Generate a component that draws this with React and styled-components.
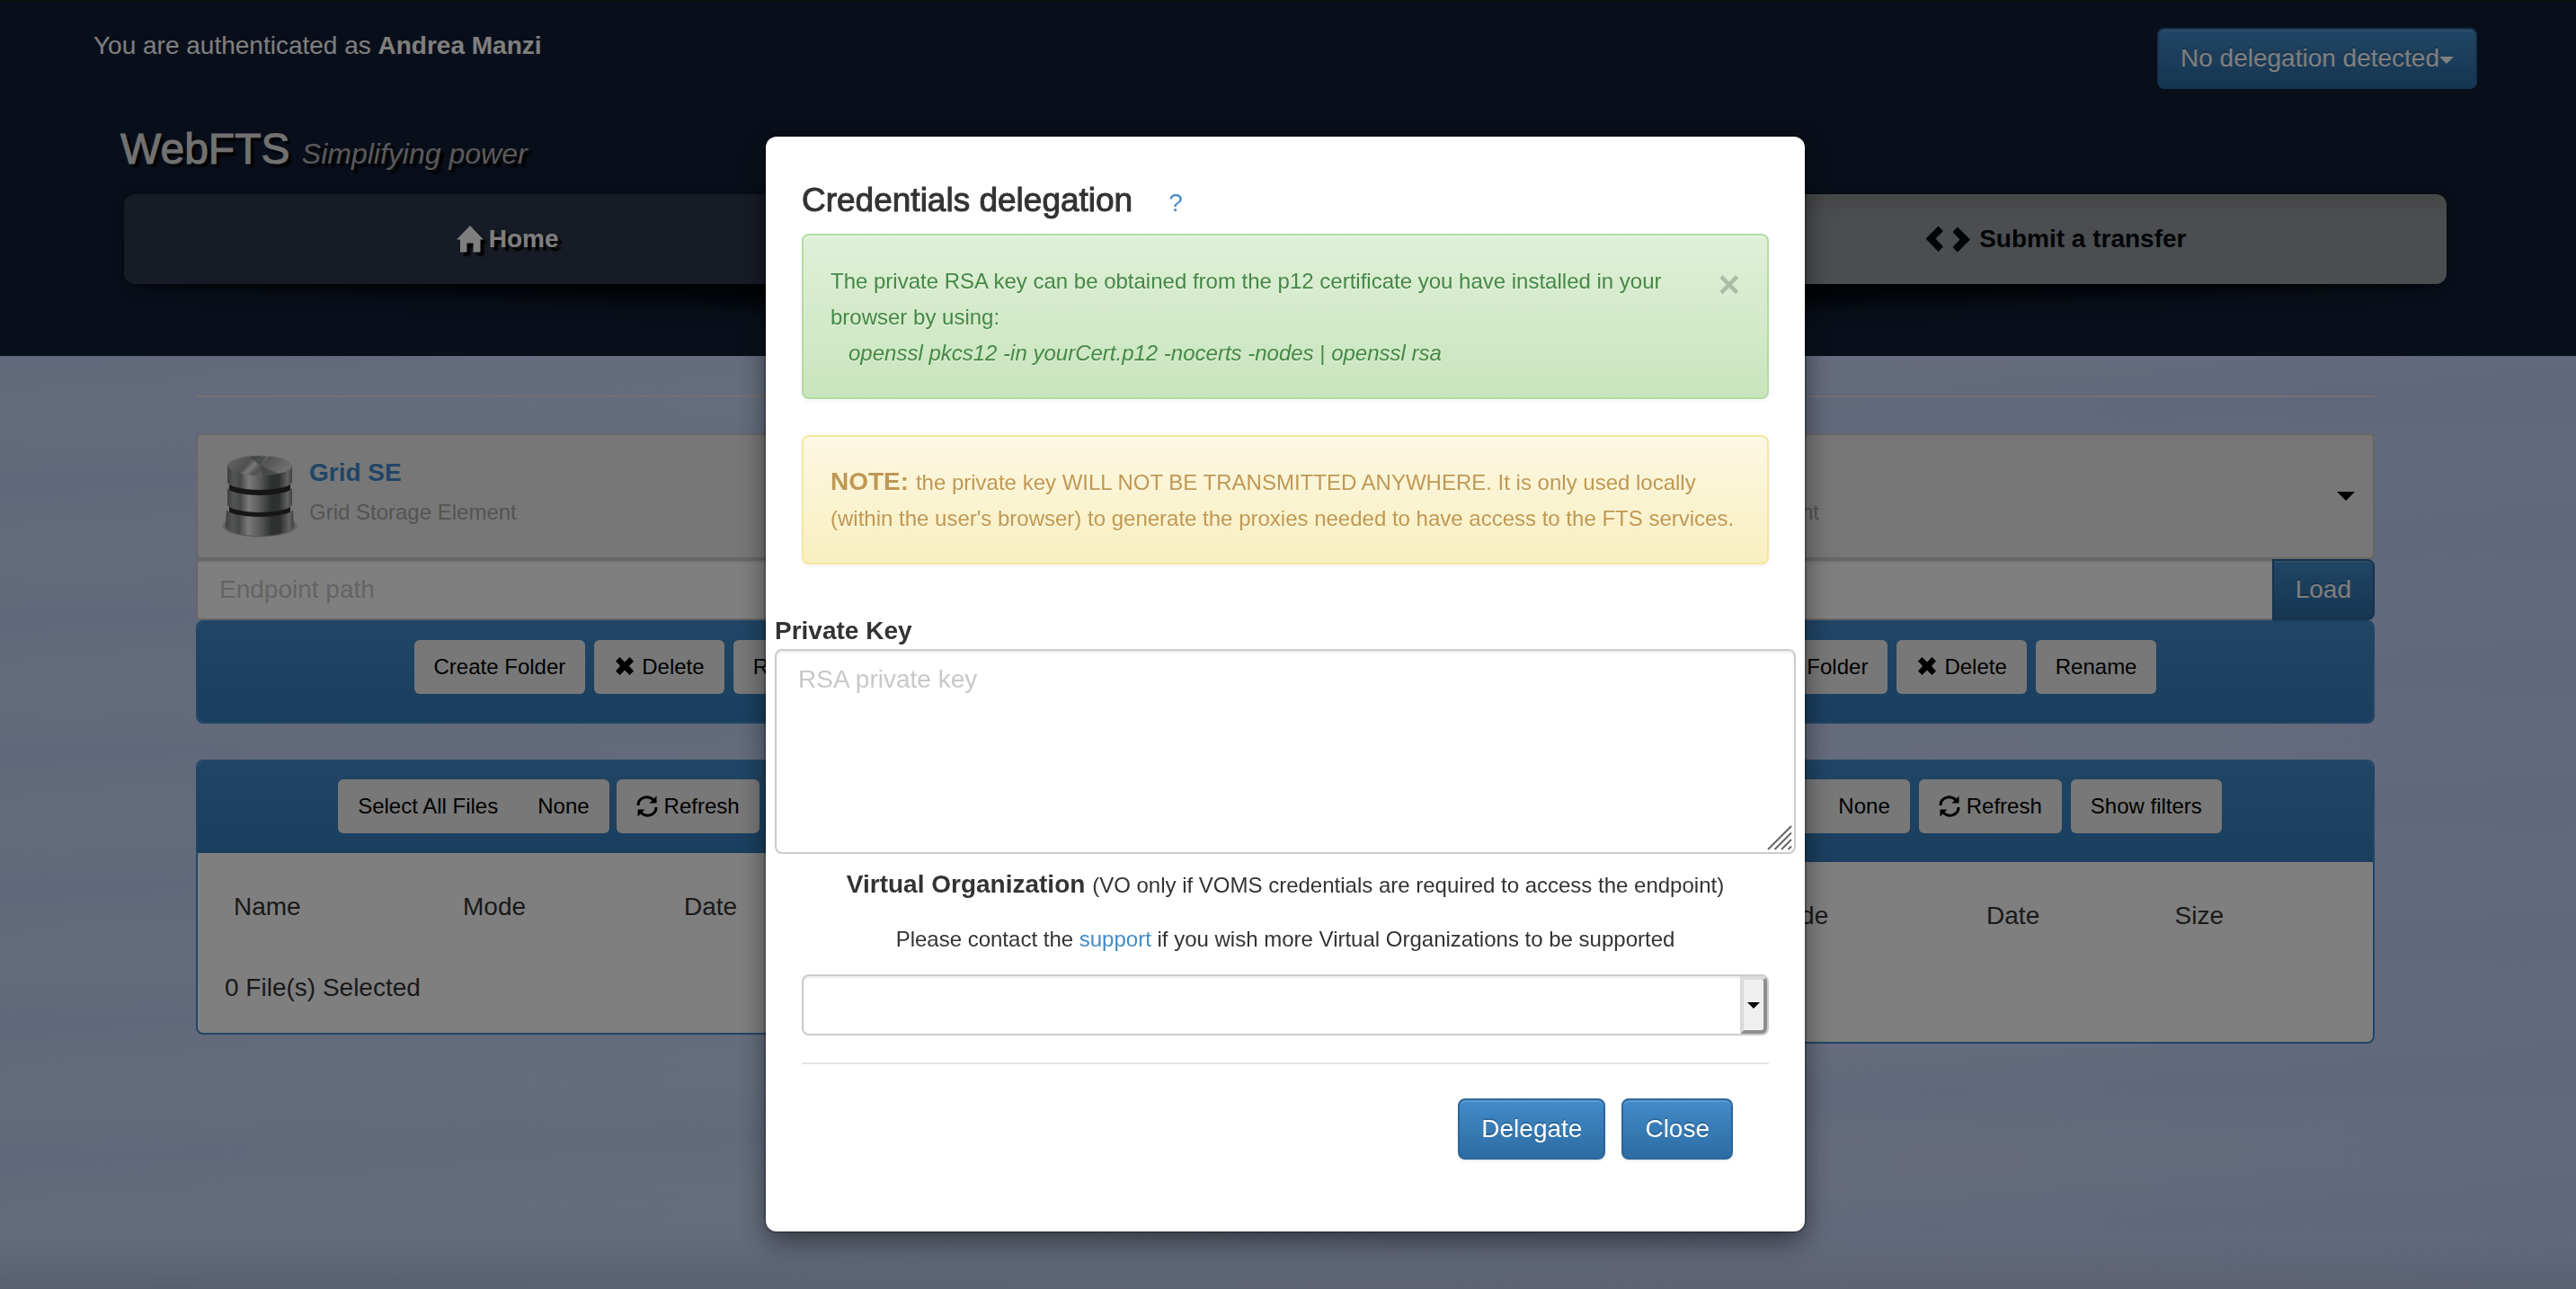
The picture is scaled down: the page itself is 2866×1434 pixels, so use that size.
import React from 'react';
import styled, { createGlobalStyle, css } from 'styled-components';

const GlobalStyle = createGlobalStyle`
  *, *::before, *::after { box-sizing: border-box; }
  body {
    margin: 0;
    min-height: 100vh;
    font: 28px/40px "Liberation Sans", Arial, sans-serif;
    color: #333;
    background:
      linear-gradient(to top, rgba(60, 60, 90, 0.12), transparent 60px),
      repeating-linear-gradient(178deg, rgba(255, 255, 255, 0.05) 0 30px, rgba(110, 140, 200, 0.05) 90px, rgba(255, 255, 255, 0.05) 150px),
      linear-gradient(90deg, #c4d4f8, #cadafa 40%, #c8d6fa 70%, #c2d2fa);
  }
  button, input, textarea, select { font: inherit; }
  p, h1, h2 { margin: 0; }
`;

const primary = css`
  color: #fff;
  border: 2px solid #2b669a;
  background: linear-gradient(#428bca, #2d6ca2);
  text-shadow: 0 -2px 0 rgba(0, 0, 0, 0.2);
  box-shadow: inset 0 2px 0 rgba(255, 255, 255, 0.15), 0 2px 2px rgba(0, 0, 0, 0.075);
`;

/* ---------- header ---------- */
const Header = styled.header`
  position: relative;
  z-index: 0;
  border-top: 2px solid #161c1c;
  background: #121e34;
  padding-bottom: 80px;
`;
const TopBar = styled.div`
  display: flex;
  justify-content: space-between;
  align-items: flex-start;
  padding: 29px 110px 0 104px;
  color: #fff;
`;
const PrimaryButton = styled.button`
  ${primary}
  height: 68px;
  padding: 0 24px;
  border-radius: ${(p) => (p.$joined ? '0 8px 8px 0' : '8px')};
  white-space: nowrap;
`;
const Caret = styled.span`
  display: inline-block;
  vertical-align: middle;
  border: ${(p) => p.$size}px solid transparent;
  border-top-color: currentColor;
  border-bottom: 0;
`;
const Brand = styled.h1`
  margin: 40px 144px 0 134px;
  font-size: 48px;
  line-height: 54px;
  font-weight: 400;
  color: #e2e2e2;
  -webkit-text-stroke: 1px currentColor;
  text-shadow: 4px 4px 2px #000;
`;
const Tagline = styled.em`
  font-size: 32px;
  line-height: 32px;
  color: #b4b4b4;
  -webkit-text-stroke: 0;
`;
const Nav = styled.nav`
  position: relative;
  margin: 23px 144px 0 138px;
  display: grid;
  grid-template-columns: repeat(3, 1fr);
  border-radius: 12px;
  box-shadow: 0 0 8px rgba(0, 0, 0, 0.5);

  &::before, &::after {
    content: '';
    position: absolute;
    z-index: -1;
    bottom: 30px;
    width: 50%;
    height: 40px;
    box-shadow: 0 30px 20px rgba(0, 0, 0, 0.8);
  }
  &::before { left: 20px; transform: rotate(2deg); transform-origin: left bottom; }
  &::after { right: 20px; transform: rotate(-2deg); transform-origin: right bottom; }
`;
const Tab = styled.a`
  display: flex;
  justify-content: center;
  align-items: center;
  gap: 6px;
  padding: 30px 38px 30px 30px;
  font-weight: 700;
  text-decoration: none;
  color: ${(p) => (p.$active ? '#04080c' : '#fff')};
  background: ${(p) => (p.$active ? 'linear-gradient(#8e8e93, #969aa0 30px)' : '#2f374a')};
  text-shadow: ${(p) => (p.$active ? 'none' : '4px 4px 2px #000')};
  &:first-child { border-radius: 12px 0 0 12px; }
  &:last-child { border-radius: 0 12px 12px 0; }
  svg { filter: ${(p) => (p.$active ? 'none' : 'drop-shadow(4px 4px 1px #000)')}; }
`;

/* ---------- page ---------- */
const Main = styled.main`
  padding: 44px 224px 40px 218px;
`;
const Rule = styled.hr`
  margin: ${(p) => p.$margin};
  border: 0;
  border-top: 2px solid ${(p) => p.$color};
`;
const Columns = styled.div`
  display: grid;
  grid-template-columns: 37fr 18fr 37fr;
  align-items: start;
`;
const Side = styled.section`
  grid-column: ${(p) => p.$col};
  min-width: 0;
`;
const Picker = styled.button`
  display: flex;
  align-items: center;
  width: 100%;
  height: 140px;
  padding: 0 20px 0 26px;
  border: 2px solid #ccc;
  border-radius: 6px;
  background: #eee;
  color: #000;
  text-align: left;

  > :last-child { margin-left: auto; }
`;
const PickerText = styled.span`
  display: flex;
  flex-direction: column;
  gap: 4px;
  margin-left: 12px;
  padding-bottom: 8px;
`;
const PickerTitle = styled.strong`
  color: #428bca;
`;
const PickerDesc = styled.span`
  font-size: 24px;
  color: #a9a9a9;
`;
const PathRow = styled.div`
  display: flex;
`;
const field = css`
  border: 2px solid #ccc;
  background: #fff;
  color: #555;
  box-shadow: inset 0 2px 2px rgba(0, 0, 0, 0.075);
  &::placeholder { color: #c8c8c8; opacity: 1; }
`;
const PathInput = styled.input`
  ${field}
  flex: 1;
  min-width: 0;
  height: 68px;
  padding: 0 24px;
  border-right: 0;
`;
const Panel = styled.div`
  margin-bottom: 40px;
  border: 2px solid #428bca;
  border-radius: 8px;
  background: #fff;
  overflow: hidden;
`;
const Toolbar = styled.div`
  display: flex;
  justify-content: center;
  gap: ${(p) => p.$gap || 10}px;
  padding: ${(p) => p.$padding};
  background: linear-gradient(#428bca, #357ebd);
`;
const ToolGroup = styled.div`
  display: flex;
  border-radius: 6px;
  overflow: hidden;
`;
const ToolButton = styled.button`
  display: flex;
  align-items: center;
  gap: 7px;
  height: 60px;
  padding: 0 22px;
  border: 0;
  border-radius: ${(p) => (p.$grouped ? 0 : '6px')};
  background: #f0f0f0;
  color: #000;
  font-size: 24px;
  white-space: nowrap;
`;
const ListBody = styled.div`
  padding: 30px;
`;
const FileTable = styled.table`
  width: 100%;
  table-layout: fixed;
  border-collapse: collapse;
  margin-bottom: 40px;
  th { padding: 10px; font-weight: 400; text-align: left; }
`;
const Col = styled.col`
  width: ${(p) => p.$w};
`;

/* ---------- modal ---------- */
const Backdrop = styled.div`
  position: fixed;
  inset: 0;
  z-index: 10;
  padding: 152px 6px 0 0;
  background: rgba(0, 0, 0, 0.5);
`;
const Dialog = styled.div`
  width: 1156px;
  max-width: 100%;
  margin: 0 auto;
  padding: 50px 40px 80px;
  border-radius: 12px;
  background: #fff;
  box-shadow: 0 0 0 2px rgba(0, 0, 0, 0.2), 0 10px 30px rgba(0, 0, 0, 0.5);
`;
const DialogHead = styled.div`
  display: flex;
  align-items: baseline;
  gap: 40px;
  height: 58px;
`;
const DialogTitle = styled.h2`
  font-size: 37px;
  line-height: 42px;
  font-weight: 400;
  -webkit-text-stroke: 1px currentColor;
`;
const Link = styled.a`
  color: #428bca;
  text-decoration: none;
`;
const tones = {
  success: css`
    border-color: #b2dba1;
    background: linear-gradient(#dff0d8, #c8e5bc);
    color: #468847;
    padding-right: 72px;
  `,
  warning: css`
    border-color: #f5e79e;
    background: linear-gradient(#fcf8e3, #f8efc0);
    color: #c09853;
  `,
};
const Alert = styled.div`
  position: relative;
  margin-bottom: 40px;
  padding: 30px;
  border: 2px solid;
  border-radius: 8px;
  text-shadow: 0 2px 0 rgba(255, 255, 255, 0.2);
  box-shadow: inset 0 2px 0 rgba(255, 255, 255, 0.25), 0 2px 4px rgba(0, 0, 0, 0.05);
  ${(p) => tones[p.$tone]}
`;
const Small = styled.span`
  font-size: 24px;
  line-height: 24px;
`;
const Command = styled.em`
  padding-left: 20px;
`;
const Dismiss = styled.button`
  position: absolute;
  top: 34px;
  right: 30px;
  padding: 0;
  border: 0;
  background: none;
  font-size: 42px;
  line-height: 42px;
  font-weight: 700;
  color: #000;
  opacity: 0.2;
  text-shadow: 0 2px 0 #fff;
`;
const KeyField = styled.div`
  position: relative;
  margin: 54px -30px 14px;
  display: flex;
  flex-direction: column;
`;
const KeyLabel = styled.label`
  font-weight: 700;
`;
const KeyArea = styled.textarea`
  ${field}
  display: block;
  width: 100%;
  height: 228px;
  padding: 12px 24px;
  border-radius: 8px;
  resize: none;
`;
const Grip = styled.svg`
  position: absolute;
  right: 3px;
  bottom: 3px;
`;
const Note = styled.p`
  margin-bottom: 20px;
  text-align: center;
`;
const SelectWrap = styled.div`
  position: relative;
`;
const VoSelect = styled.select`
  ${field}
  appearance: none;
  display: block;
  width: 100%;
  height: 68px;
  padding: 0 48px 0 24px;
  border-radius: 8px;
`;
const SelectArrow = styled.span`
  position: absolute;
  top: 2px;
  right: 2px;
  bottom: 2px;
  width: 30px;
  display: flex;
  align-items: center;
  justify-content: center;
  border: 4px solid;
  border-color: #dadada #8f8f8f #8f8f8f #dadada;
  border-radius: 0 6px 6px 0;
  background: #efefef;
  color: #000;
  pointer-events: none;
`;
const Actions = styled.div`
  display: flex;
  justify-content: flex-end;
  gap: 18px;
  padding-right: 40px;
`;

/* ---------- icons ---------- */
const HomeIcon = () => (
  <svg width="30" height="30" viewBox="0 0 30 30" fill="currentColor" aria-hidden="true">
    <path d="M15 0 30 15.5H26.5V29.500H18.500V19.500H11.500V29.500H4V15.500H0Z" />
  </svg>
);
const CodeIcon = () => (
  <svg width="54" height="30" viewBox="0 0 54 30" fill="currentColor" aria-hidden="true">
    <path d="M14.500 0.500 20 6 11.500 14.500 20 23.500 14.500 29 0.500 14.500Z" />
    <path d="M36 1.500 30.500 7 38.500 15.500 30.500 24 36 29.500 50 15.500Z" />
  </svg>
);
const RemoveIcon = () => (
  <svg width="24" height="24" viewBox="0 0 24 24" fill="currentColor" aria-hidden="true">
    <path d="M6.500 1 12 6.500 17.500 1 22 5.500 17 11 22 16.500 17.500 21 12 15.500 6.500 21 2 16.500 7 11 2 5.500Z" />
  </svg>
);
const RefreshIcon = () => (
  <svg width="24" height="24" viewBox="0 0 24 24" aria-hidden="true">
    <g fill="none" stroke="currentColor" strokeWidth="3">
      <path d="M2 11C2 2 13-1 19 5" />
      <path d="M22 13C22 22 11 25 5 19" />
    </g>
    <path fill="currentColor" d="M22.500 0.500V8.500H14.500ZM1.500 23.500V15.500H9.500Z" />
  </svg>
);
const DiskIcon = () => (
  <svg width="86" height="96" viewBox="0 0 86 96" aria-hidden="true">
    <defs>
      <linearGradient id="metal" x1="0" x2="1">
        <stop offset="0" stopColor="#777c7a" />
        <stop offset="0.100" stopColor="#a8acaa" />
        <stop offset="0.200" stopColor="#8c908e" />
        <stop offset="0.330" stopColor="#f4f4f4" />
        <stop offset="0.500" stopColor="#b0b3b1" />
        <stop offset="0.680" stopColor="#5a605c" />
        <stop offset="0.800" stopColor="#5e6460" />
        <stop offset="0.930" stopColor="#c2c5c3" />
        <stop offset="1" stopColor="#7e8280" />
      </linearGradient>
      <linearGradient id="lid" x1="0" x2="1" y2="0.300">
        <stop offset="0" stopColor="#cfd1d0" />
        <stop offset="0.400" stopColor="#9fa3a1" />
        <stop offset="0.500" stopColor="#f2f2f2" />
        <stop offset="0.620" stopColor="#a4a8a6" />
        <stop offset="1" stopColor="#dcdddc" />
      </linearGradient>
      <radialGradient id="floor">
        <stop offset="0.700" stopColor="#222" stopOpacity="0.800" />
        <stop offset="1" stopColor="#222" stopOpacity="0" />
      </radialGradient>
    </defs>
    <ellipse cx="43" cy="81" rx="43" ry="13" fill="url(#floor)" />
    <path d="M9 16V78A34 11 0 0 0 77 78V16Z" fill="#2a2d2b" />
    <path d="M6 62A37 9 0 0 0 80 62L81 81A38 11 0 0 1 5 81Z" fill="url(#metal)" />
    <path d="M7 38A36 9 0 0 0 79 38V57A36 9 0 0 1 7 57Z" fill="url(#metal)" />
    <path d="M7 13V32A36 9 0 0 0 79 32V13Z" fill="url(#metal)" />
    <ellipse cx="43" cy="14" rx="36" ry="11" fill="url(#lid)" />
    <path d="M43 14 32 4A36 11 0 0 1 50 3.500ZM43 14 46 25A36 11 0 0 0 64 23Z" fill="#7b827f" opacity="0.700" />
  </svg>
);
const GripIcon = () => (
  <Grip width="30" height="30" viewBox="0 0 30 30" fill="none" stroke="#666" strokeWidth="2" aria-hidden="true">
    <path d="M2 28 28 2M9.500 28 28 9.500M17 28 28 17M24.500 28 28 24.500" />
  </Grip>
);

/* ---------- composition ---------- */
const Endpoint = ({ col, name, listPadding, listGap }) => (
  <Side $col={col}>
    <Picker type="button">
      <DiskIcon />
      <PickerText>
        <PickerTitle>Grid SE</PickerTitle>
        <PickerDesc>Grid Storage Element</PickerDesc>
      </PickerText>
      <Caret $size={10} />
    </Picker>
    <PathRow>
      <PathInput type="text" placeholder="Endpoint path" aria-label={`${name} endpoint path`} />
      <PrimaryButton type="button" $joined>Load</PrimaryButton>
    </PathRow>
    <Panel>
      <Toolbar $padding="20px 20px 31px">
        <ToolButton type="button">Create Folder</ToolButton>
        <ToolButton type="button"><RemoveIcon />Delete</ToolButton>
        <ToolButton type="button">Rename</ToolButton>
      </Toolbar>
    </Panel>
    <Panel>
      <Toolbar $padding={listPadding} $gap={listGap}>
        <ToolGroup>
          <ToolButton type="button" $grouped>Select All Files</ToolButton>
          <ToolButton type="button" $grouped>None</ToolButton>
        </ToolGroup>
        <ToolButton type="button"><RefreshIcon />Refresh</ToolButton>
        <ToolButton type="button">Show filters</ToolButton>
      </Toolbar>
      <ListBody>
        <FileTable>
          <colgroup>
            <Col $w="28%" />
            <Col $w="27%" />
            <Col $w="23%" />
            <Col $w="22%" />
          </colgroup>
          <thead>
            <tr>
              <th scope="col">Name</th>
              <th scope="col">Mode</th>
              <th scope="col">Date</th>
              <th scope="col">Size</th>
            </tr>
          </thead>
        </FileTable>
        <p>0 File(s) Selected</p>
      </ListBody>
    </Panel>
  </Side>
);

const DelegationDialog = () => (
  <Backdrop>
    <Dialog role="dialog" aria-modal="true" aria-labelledby="delegation-title">
      <DialogHead>
        <DialogTitle id="delegation-title">Credentials delegation</DialogTitle>
        <Link href="#help">?</Link>
      </DialogHead>
      <Alert $tone="success">
        <Dismiss type="button" aria-label="Dismiss">×</Dismiss>
        <p>
          <Small>
            The private RSA key can be obtained from the p12 certificate you have installed in your browser by using:
            <br />
            <Command>openssl pkcs12 -in yourCert.p12 -nocerts -nodes</Command> | <em>openssl rsa</em>
          </Small>
        </p>
      </Alert>
      <Alert $tone="warning">
        <p>
          <strong>NOTE:</strong>{' '}
          <Small>
            the private key WILL NOT BE TRANSMITTED ANYWHERE. It is only used locally (within the user's browser) to
            generate the proxies needed to have access to the FTS services.
          </Small>
        </p>
      </Alert>
      <KeyField>
        <KeyLabel htmlFor="private-key">Private Key</KeyLabel>
        <KeyArea id="private-key" placeholder="RSA private key" />
        <GripIcon />
      </KeyField>
      <Note>
        <label htmlFor="vo">
          <strong>Virtual Organization</strong>{' '}
          <Small>(VO only if VOMS credentials are required to access the endpoint)</Small>
        </label>
      </Note>
      <Note>
        <Small>
          Please contact the <Link href="#support">support</Link> if you wish more Virtual Organizations to be supported
        </Small>
      </Note>
      <SelectWrap>
        <VoSelect id="vo" defaultValue="">
          <option value="" />
        </VoSelect>
        <SelectArrow><Caret $size={7} /></SelectArrow>
      </SelectWrap>
      <Rule $margin="30px 0 38px" $color="#e5e5e5" />
      <Actions>
        <PrimaryButton type="button">Delegate</PrimaryButton>
        <PrimaryButton type="button">Close</PrimaryButton>
      </Actions>
    </Dialog>
  </Backdrop>
);

export default function App() {
  return (
    <>
      <GlobalStyle />
      <Header>
        <TopBar>
          <span>You are authenticated as <strong>Andrea Manzi</strong></span>
          <PrimaryButton type="button">No delegation detected<Caret $size={8} /></PrimaryButton>
        </TopBar>
        <Brand>WebFTS <Tagline>Simplifying power</Tagline></Brand>
        <Nav>
          <Tab href="#home"><HomeIcon />Home</Tab>
          <Tab href="#jobs">My jobs</Tab>
          <Tab href="#transfer" $active><CodeIcon />Submit a transfer</Tab>
        </Nav>
      </Header>
      <Main>
        <Rule $margin="0 0 40px" $color="#e6e2e0" />
        <Columns>
          <Endpoint col={1} name="Source" listPadding="20px 34px 22px 20px" listGap={8} />
          <Endpoint col={3} name="Destination" listPadding="20px 34px 32px 20px" listGap={10} />
        </Columns>
      </Main>
      <DelegationDialog />
    </>
  );
}
